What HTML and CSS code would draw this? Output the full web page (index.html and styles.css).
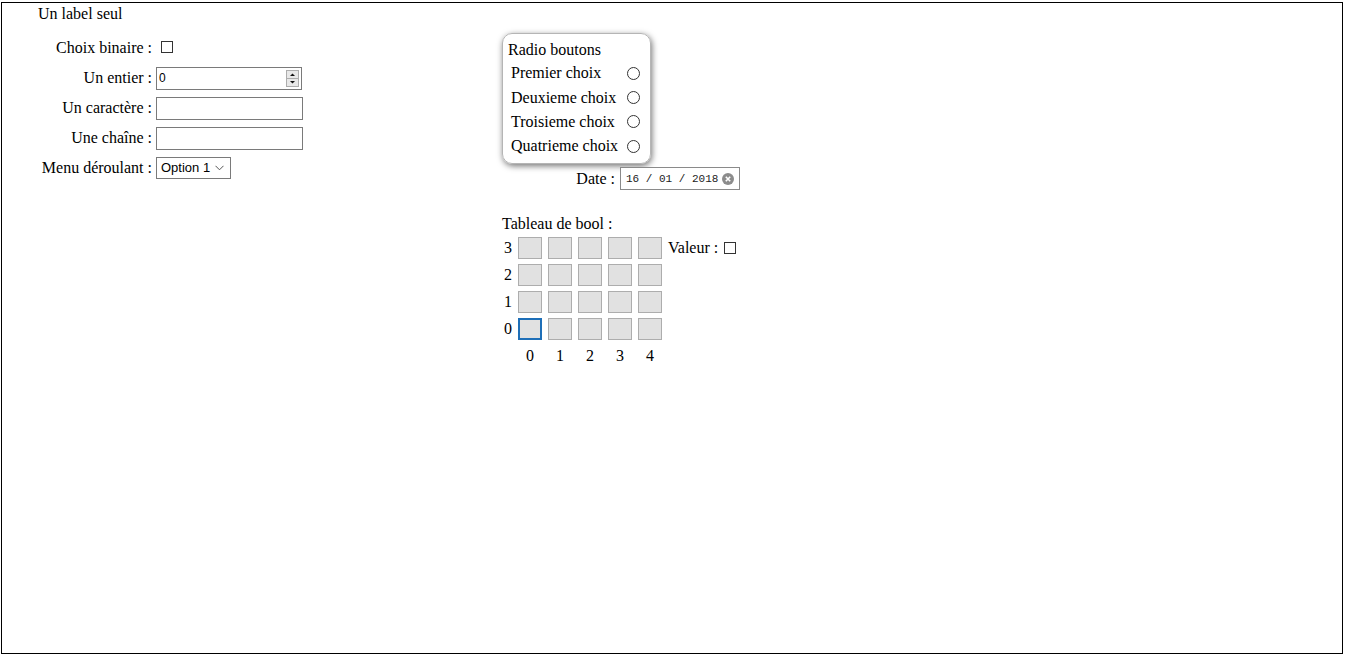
FILE: index.html
```html
<!DOCTYPE html>
<html lang="fr">
<head>
<meta charset="utf-8">
<title>Formulaire</title>
<link rel="stylesheet" href="styles.css">
</head>
<body>
<div class="frame">
  <div class="left">
    <div class="solo">Un label seul</div>
    <div class="form">
      <label class="lbl">Choix binaire :</label>
      <div class="ctl"><input type="checkbox" class="check check-binaire"></div>

      <label class="lbl">Un entier :</label>
      <div class="ctl">
        <div class="field field-num">
          <span class="field-text">0</span>
          <span class="spinner">
            <svg width="13" height="17" viewBox="0 0 13 17">
              <rect x="0.5" y="0.5" width="12" height="16" fill="#e8e8e8" stroke="#adadad"/>
              <line x1="1" y1="8.5" x2="12" y2="8.5" stroke="#adadad"/>
              <path d="M4 6 L9 6 L6.5 3.5 Z" fill="#111"/>
              <path d="M4 11 L9 11 L6.5 13.5 Z" fill="#111"/>
            </svg>
          </span>
        </div>
      </div>

      <label class="lbl">Un caractère :</label>
      <div class="ctl"><div class="field field-text-input"></div></div>

      <label class="lbl">Une chaîne :</label>
      <div class="ctl"><div class="field field-text-input"></div></div>

      <label class="lbl">Menu déroulant :</label>
      <div class="ctl">
        <div class="field field-select">
          <span class="field-text">Option 1</span>
          <svg class="chev" width="9" height="6" viewBox="0 0 9 6"><path d="M0.5 0.8 L4.5 4.8 L8.5 0.8" fill="none" stroke="#555" stroke-width="1"/></svg>
        </div>
      </div>
    </div>
  </div>

  <div class="middle">
    <div class="radio-box">
      <div class="radio-title">Radio boutons</div>
      <div class="radio-list">
        <span>Premier choix</span><span class="radio"></span>
        <span>Deuxieme choix</span><span class="radio"></span>
        <span>Troisieme choix</span><span class="radio"></span>
        <span>Quatrieme choix</span><span class="radio"></span>
      </div>
    </div>

    <div class="date-row">
      <span class="lbl">Date :</span>
      <div class="field field-date">
        <span class="date-text">16 / 01 / 2018</span>
        <svg class="clear" width="12" height="12" viewBox="0 0 12 12">
          <circle cx="6" cy="6" r="6" fill="#8c8c8c"/>
          <path d="M3.8 3.8 L8.2 8.2 M8.2 3.8 L3.8 8.2" stroke="#fff" stroke-width="1.6"/>
        </svg>
      </div>
    </div>

    <div class="bool-title">Tableau de bool :</div>
    <div class="bool-grid">
      <span class="rl">3</span><span class="cell"></span><span class="cell"></span><span class="cell"></span><span class="cell"></span><span class="cell"></span>
      <span class="valeur">Valeur : <input type="checkbox" class="check"></span>
      <span class="rl">2</span><span class="cell"></span><span class="cell"></span><span class="cell"></span><span class="cell"></span><span class="cell"></span><span></span>
      <span class="rl">1</span><span class="cell"></span><span class="cell"></span><span class="cell"></span><span class="cell"></span><span class="cell"></span><span></span>
      <span class="rl">0</span><span class="cell cell-focus"></span><span class="cell"></span><span class="cell"></span><span class="cell"></span><span class="cell"></span><span></span>
      <span></span><span class="cl">0</span><span class="cl">1</span><span class="cl">2</span><span class="cl">3</span><span class="cl">4</span><span></span>
    </div>
  </div>
</div>
</body>
</html>
```
FILE: styles.css
```css
html, body {
  margin: 0;
  padding: 0;
  background: #fff;
}
body {
  font-family: "Liberation Serif", "Times New Roman", serif;
  font-size: 16px;
  line-height: 18px;
  color: #000;
}
.frame {
  margin: 2px 0 0 1px;
  width: 1342px;
  height: 652px;
  box-sizing: border-box;
  border: 1px solid #000;
  display: flex;
  align-items: flex-start;
}
.left {
  width: 500px;
  padding-top: 2px;
}
.solo {
  margin-left: 36px;
}
.form {
  margin-top: 10px;
  display: grid;
  grid-template-columns: 150px auto;
  grid-auto-rows: 30px;
  column-gap: 4px;
  align-items: center;
}
.lbl {
  text-align: right;
  white-space: nowrap;
}
.ctl {
  display: flex;
  align-items: center;
}
.check {
  appearance: none;
  -webkit-appearance: none;
  width: 12px;
  height: 12px;
  margin: 0;
  border: 1px solid #333;
  background: #fff;
  box-sizing: border-box;
}
.check-binaire {
  margin-left: 5px;
  margin-top: -3px;
}
.field {
  box-sizing: border-box;
  border: 1px solid #7a7a7a;
  background: #fff;
  display: flex;
  align-items: center;
  font-family: "Liberation Sans", Arial, sans-serif;
  font-size: 12px;
}
.field-num {
  width: 146px;
  height: 23px;
  padding: 0 2px 0 2px;
  justify-content: space-between;
}
.spinner {
  display: flex;
}
.field-text-input {
  width: 147px;
  height: 23px;
}
.field-select {
  width: 75px;
  height: 22px;
  margin-top: -1px;
  padding: 0 6px 0 4px;
  justify-content: space-between;
  font-size: 13px;
}
.chev {
  display: block;
}
.middle {
  width: 238px;
  padding-top: 30px;
}
.radio-box {
  width: 149px;
  height: 131px;
  box-sizing: border-box;
  border: 1px solid #b5b5b5;
  border-radius: 10px;
  box-shadow: 1px 2px 6px rgba(0, 0, 0, 0.55);
  padding: 7px 0 0 5px;
}
.radio-list {
  margin-top: 2px;
  margin-left: 3px;
  display: grid;
  grid-template-columns: max-content 13px;
  justify-content: start;
  column-gap: 9px;
  grid-auto-rows: 24.4px;
  align-items: center;
  white-space: nowrap;
}
.radio {
  width: 13px;
  height: 13px;
  box-sizing: border-box;
  border: 1px solid #333;
  border-radius: 50%;
  justify-self: end;
}
.date-row {
  margin-top: 3px;
  display: flex;
  justify-content: flex-end;
  align-items: center;
  gap: 5px;
}
.field-date {
  width: 120px;
  height: 23px;
  padding: 0 5px 0 5px;
  justify-content: space-between;
  border-color: #8a8a8a;
}
.date-text {
  font-family: "Liberation Mono", "Courier New", monospace;
  font-size: 11px;
  color: #222;
}
.clear {
  display: block;
}
.bool-title {
  margin-top: 25px;
}
.bool-grid {
  margin-top: 4px;
  display: grid;
  grid-template-columns: 10px repeat(5, 24px) auto;
  grid-template-rows: repeat(4, 22px) 20px;
  column-gap: 6px;
  row-gap: 5px;
  align-items: center;
}
.rl {
  text-align: right;
}
.cl {
  text-align: center;
  align-self: end;
}
.cell {
  height: 22px;
  box-sizing: border-box;
  border: 1px solid #adadad;
  background: #e1e1e1;
}
.cell-focus {
  border: 2px solid #1e6fb8;
}
.valeur {
  display: flex;
  align-items: center;
  gap: 6px;
  white-space: nowrap;
}
```
